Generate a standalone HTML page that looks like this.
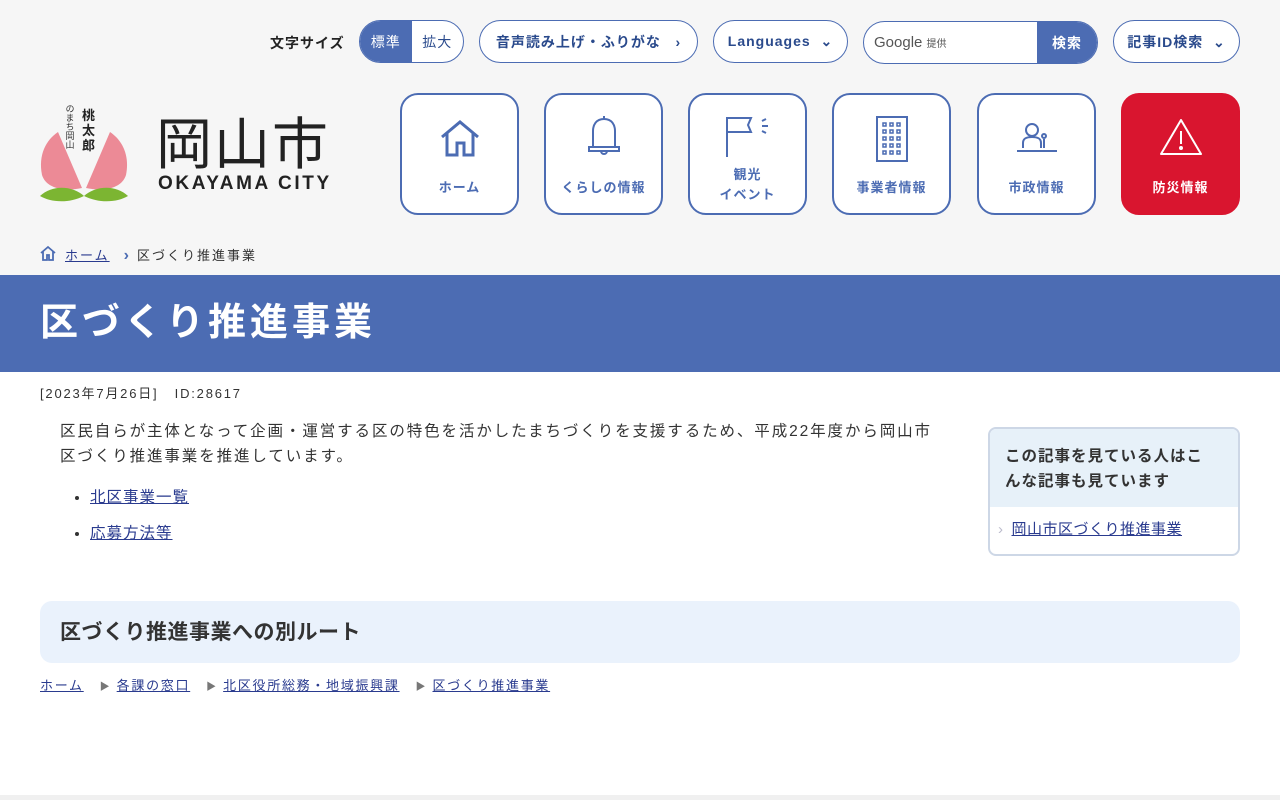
<!DOCTYPE html>
<html lang="ja"><head><meta charset="utf-8">
<style>
*{box-sizing:border-box;margin:0;padding:0}
body{width:1280px;height:800px;overflow:hidden;background:#fff;font-family:"Liberation Sans","Noto Sans CJK JP",sans-serif;color:#333;position:relative}
.hdr{position:absolute;left:0;top:0;width:1280px;height:275px;background:#f6f6f6}
.abs{position:absolute}
.pill{position:absolute;height:43px;border:1px solid #4c6cb3;border-radius:22px;background:#fff;color:#2a4a8c;font-weight:bold;font-size:14px;display:flex;align-items:center;justify-content:center;letter-spacing:1px}
.nav{position:absolute;top:93px;width:119px;height:122px;border:2px solid #4c6cb3;border-radius:18px;background:#fff;color:#4c6cb3;font-size:13px;font-weight:bold;text-align:center;letter-spacing:1px}
.nav svg{position:absolute;left:50%;transform:translateX(-50%)}
.nav .t{position:absolute;left:0;right:0;top:82px}
a{color:#2a3b8f}
</style></head><body>
<div class="hdr"></div>
<div class="abs" style="left:270px;top:33px;font-size:14px;font-weight:bold;color:#222;letter-spacing:1px">文字サイズ</div>
<div class="pill" style="left:359px;top:20px;width:105px;overflow:hidden;justify-content:flex-start">
 <span style="background:#4c6cb3;color:#fff;width:52px;height:43px;display:flex;align-items:center;justify-content:center;font-weight:normal">標準</span>
 <span style="width:52px;text-align:center;font-weight:normal">拡大</span></div>
<div class="pill" style="left:479px;top:20px;width:219px">音声読み上げ・ふりがな&nbsp;&nbsp;&nbsp;›</div>
<div class="pill" style="left:713px;top:20px;width:135px">Languages &nbsp;⌄</div>
<div class="pill" style="left:863px;top:21px;width:235px;overflow:hidden;justify-content:flex-start">
 <span style="flex:1;padding-left:10px;color:#555;font-weight:normal;font-size:15px;letter-spacing:0">Google <span style="font-size:10px">提供</span></span>
 <span style="background:#4c6cb3;color:#fff;width:60px;height:43px;display:flex;align-items:center;justify-content:center">検索</span></div>
<div class="pill" style="left:1113px;top:20px;width:127px">記事ID検索 &nbsp;⌄</div>

<svg class="abs" style="left:38px;top:100px" width="95" height="105" viewBox="0 0 95 105">
 <path d="M44 88 L20 32 C8 40 0 55 4 75 C8 88 25 92 44 88Z" fill="#ec8a96"/>
 <path d="M48 88 L72 32 C84 40 92 55 88 75 C84 88 67 92 48 88Z" fill="#ec8a96"/>
 <path d="M2 96 C15 84 35 86 46 96 C30 104 12 102 2 96Z" fill="#7cb532"/>
 <path d="M90 96 C77 84 57 86 46 96 C62 104 80 102 90 96Z" fill="#7cb532"/>
 <text x="44" y="20" font-size="13" font-weight="bold" fill="#222" font-family="Noto Sans CJK JP">桃</text>
 <text x="44" y="35" font-size="13" font-weight="bold" fill="#222" font-family="Noto Sans CJK JP">太</text>
 <text x="44" y="50" font-size="13" font-weight="bold" fill="#222" font-family="Noto Sans CJK JP">郎</text>
 <text x="32" y="4" font-size="9" fill="#333" writing-mode="tb" font-family="Noto Sans CJK JP">のまち岡山</text>
</svg>
<div class="abs" style="left:156px;top:106px;font-size:56px;color:#222;letter-spacing:2px;line-height:70px;font-family:'Noto Sans CJK JP',sans-serif;font-weight:400">岡山市</div>
<div class="abs" style="left:158px;top:173px;font-size:19px;font-weight:bold;color:#222;letter-spacing:2.6px">OKAYAMA CITY</div>

<div class="nav" style="left:400px"><svg style="top:22px" width="42" height="42" viewBox="0 0 42 42" fill="none" stroke="#4c6cb3" stroke-width="3"><path d="M3 20 L21 5 L39 20"/><path d="M8 16 V38 H18 V26 H25 V38 H34 V16"/></svg><div class="t">ホーム</div></div>
<div class="nav" style="left:544px"><svg style="top:20px" width="40" height="48" viewBox="0 0 40 48" fill="none" stroke="#4c6cb3" stroke-width="2"><path d="M20 4 C12 4 9 10 9 16 V32 H31 V16 C31 10 28 4 20 4Z"/><path d="M5 32 H35 V36 H5Z"/><path d="M17 36 a3 3 0 0 0 6 0"/><path d="M20 1 V4"/></svg><div class="t">くらしの情報</div></div>
<div class="nav" style="left:688px"><svg style="top:20px" width="48" height="45" viewBox="0 0 48 45" fill="none" stroke="#4c6cb3" stroke-width="2"><path d="M3 42 V3 H27 L24 10 L27 17 H3"/><path d="M38 6 L42 4 M38 11 H44 M38 16 L42 18"/></svg><div class="t" style="top:70px;line-height:20px">観光<br>イベント</div></div>
<div class="nav" style="left:832px"><svg style="top:20px" width="34" height="48" viewBox="0 0 34 48" fill="none" stroke="#4c6cb3" stroke-width="2"><rect x="2" y="2" width="30" height="44"/><g stroke-width="1.5"><rect x="8" y="8" width="3" height="3"/><rect x="15" y="8" width="3" height="3"/><rect x="22" y="8" width="3" height="3"/><rect x="8" y="15" width="3" height="3"/><rect x="15" y="15" width="3" height="3"/><rect x="22" y="15" width="3" height="3"/><rect x="8" y="22" width="3" height="3"/><rect x="15" y="22" width="3" height="3"/><rect x="22" y="22" width="3" height="3"/><rect x="8" y="29" width="3" height="3"/><rect x="15" y="29" width="3" height="3"/><rect x="22" y="29" width="3" height="3"/><rect x="8" y="36" width="3" height="3"/><rect x="15" y="36" width="3" height="3"/><rect x="22" y="36" width="3" height="3"/></g></svg><div class="t">事業者情報</div></div>
<div class="nav" style="left:977px"><svg style="top:26px" width="44" height="34" viewBox="0 0 44 34" fill="none" stroke="#4c6cb3" stroke-width="2"><circle cx="17" cy="9" r="6"/><path d="M8 27 V22 C8 17 12 16 17 16 C22 16 26 17 26 22 V27"/><path d="M29 27 V18"/><circle cx="29" cy="15" r="2"/><path d="M2 30 H42"/></svg><div class="t">市政情報</div></div>
<div class="nav" style="left:1121px;background:#d9152f;border-color:#d9152f;color:#fff"><svg style="top:22px" width="44" height="40" viewBox="0 0 44 40" fill="none" stroke="#fff" stroke-width="2"><path d="M22 3 L42 37 H2Z" stroke-linejoin="round"/><path d="M22 14 V27"/><circle cx="22" cy="31" r="1" fill="#fff"/></svg><div class="t">防災情報</div></div>

<svg class="abs" style="left:40px;top:245px" width="16" height="16" viewBox="0 0 16 16" fill="none" stroke="#4c6cb3" stroke-width="1.8"><path d="M1 8 L8 2 L15 8"/><path d="M3 6 V15 H7 V10 H9 V15 H13 V6"/></svg>
<div class="abs" style="left:65px;top:245px;font-size:13px;letter-spacing:2px"><a href="#">ホーム</a><span style="color:#4c6cb3;margin:0 6px 0 14px;font-weight:bold;font-size:16px">›</span>区づくり推進事業</div>

<div class="abs" style="left:0;top:275px;width:1280px;height:97px;background:#4c6cb3"></div>
<div class="abs" style="left:40px;top:298px;font-size:38px;color:#fff;font-weight:bold;letter-spacing:4px;line-height:50px">区づくり推進事業</div>
<div class="abs" style="left:40px;top:383px;font-size:13px;letter-spacing:1.8px;color:#333">[2023年7月26日]&nbsp;&nbsp;&nbsp;ID:28617</div>

<div class="abs" style="left:60px;top:419px;width:885px;font-size:15.5px;line-height:25px;letter-spacing:1.9px">区民自らが主体となって企画・運営する区の特色を活かしたまちづくりを支援するため、平成22年度から岡山市区づくり推進事業を推進しています。</div>
<ul class="abs" style="left:90px;top:480px;font-size:15.5px;letter-spacing:1px;line-height:36px">
<li><a href="#">北区事業一覧</a></li><li><a href="#">応募方法等</a></li></ul>

<div class="abs" style="left:988px;top:427px;width:252px;height:129px;border:2px solid #cdd7e6;border-radius:8px;overflow:hidden;background:#fff">
 <div style="background:#e7f1f9;height:78px;padding:15px 20px 15px 15px;font-size:15.5px;font-weight:bold;line-height:25px;letter-spacing:1px">この記事を見ている人はこんな記事も見ています</div>
 <div style="padding:11px 8px;font-size:15px;letter-spacing:0.5px"><span style="color:#bbc;margin-right:8px">›</span><a href="#">岡山市区づくり推進事業</a></div>
</div>

<div class="abs" style="left:40px;top:601px;width:1200px;height:62px;background:#eaf2fc;border-radius:12px;padding:15px 20px;font-size:21px;font-weight:bold;letter-spacing:0.5px">区づくり推進事業への別ルート</div>
<div class="abs" style="left:40px;top:675px;font-size:13px;letter-spacing:1.7px;color:#777"><a href="#">ホーム</a>&nbsp;&nbsp;&nbsp;<span style="font-size:10px">▶</span> <a href="#">各課の窓口</a>&nbsp;&nbsp;&nbsp;<span style="font-size:10px">▶</span> <a href="#">北区役所総務・地域振興課</a>&nbsp;&nbsp;&nbsp;<span style="font-size:10px">▶</span> <a href="#">区づくり推進事業</a></div>
<div class="abs" style="left:0;top:795px;width:1280px;height:5px;background:#f0f0f0"></div>
</body></html>
